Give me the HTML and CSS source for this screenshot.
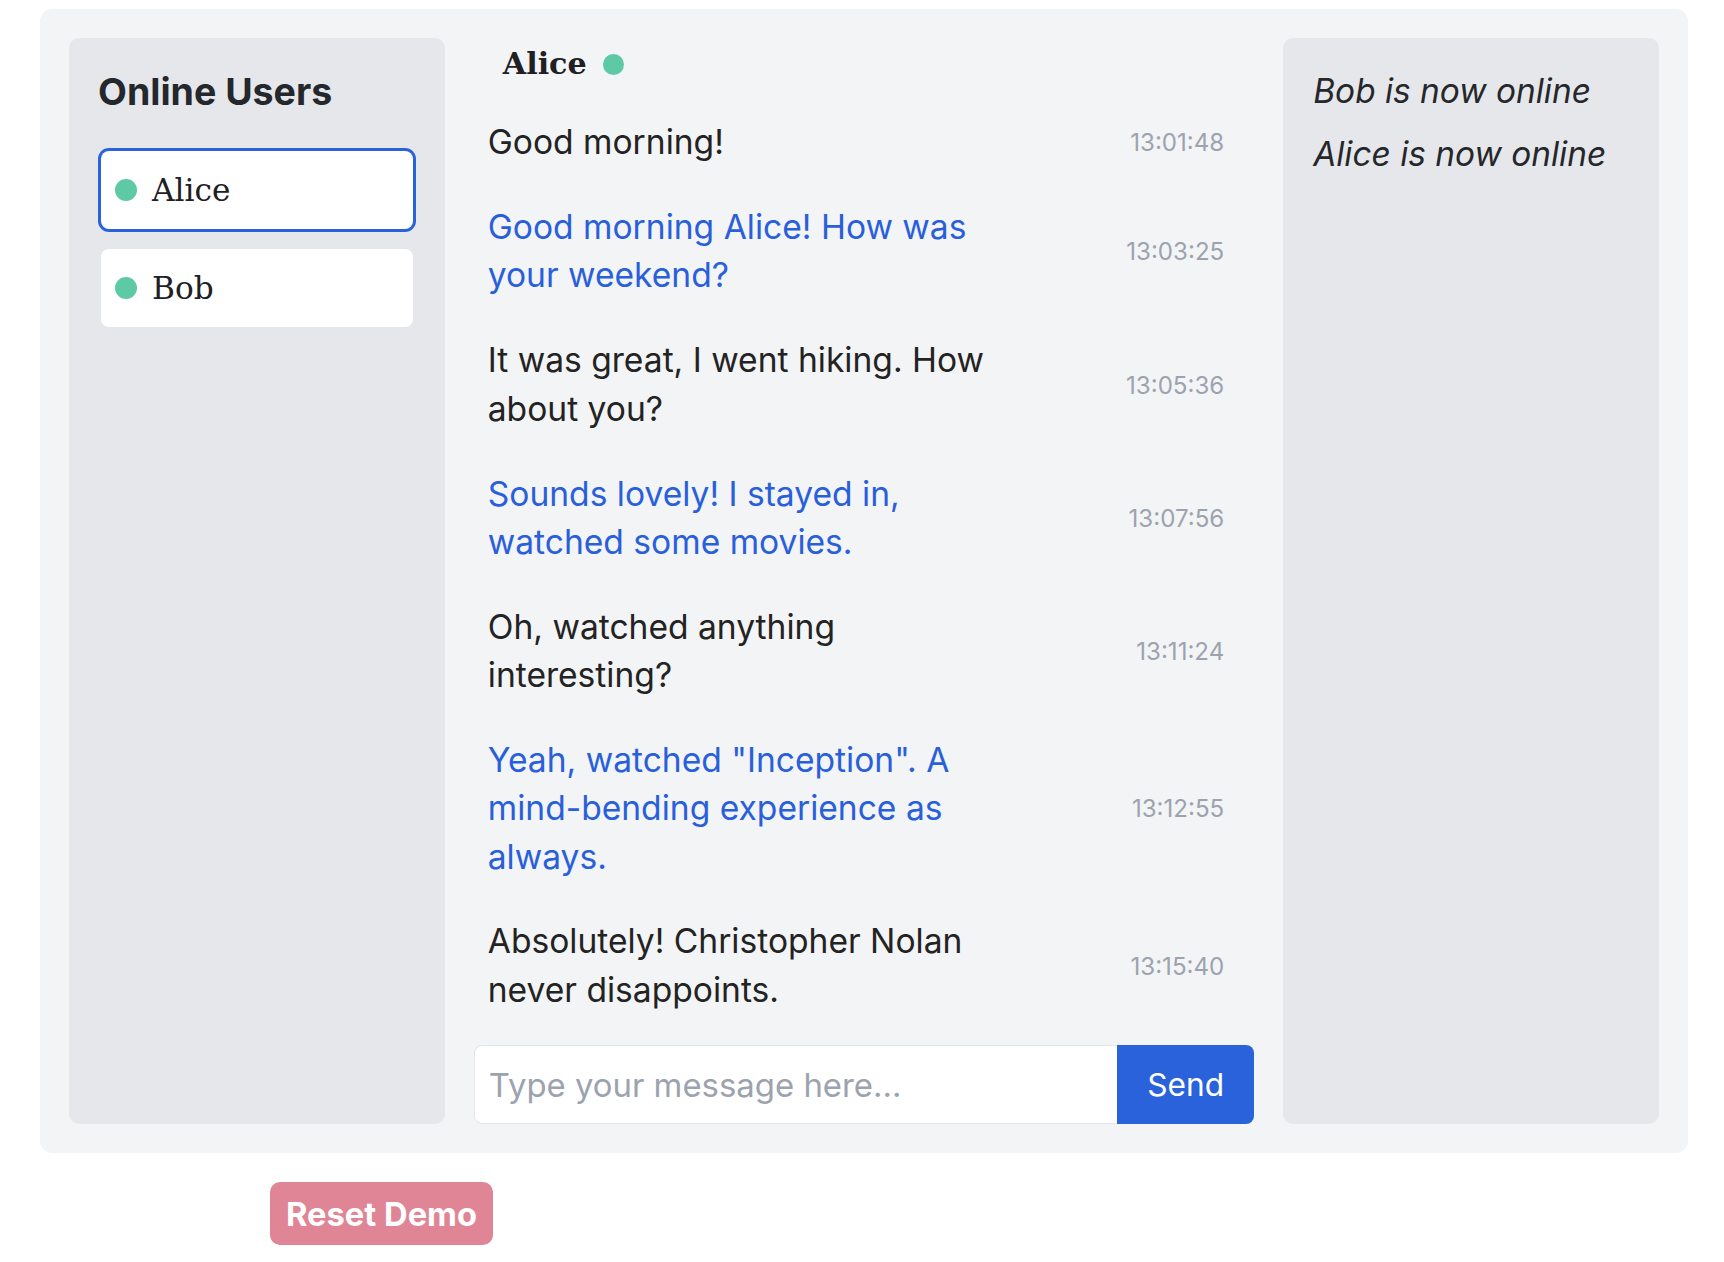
FILE: index.html
```html
<!DOCTYPE html>
<html lang="en">
<head>
<meta charset="utf-8">
<title>Chat Demo</title>
<link rel="stylesheet" href="styles.css">
</head>
<body>
<div class="page">
  <div class="app">
    <aside class="users">
      <h2 class="users-title">Online Users</h2>
      <ul class="user-list">
        <li class="user-card active"><span class="dot"></span><span class="user-name">Alice</span></li>
        <li class="user-card"><span class="dot"></span><span class="user-name">Bob</span></li>
      </ul>
    </aside>

    <section class="chat">
      <header class="chat-header"><span class="chat-name">Alice</span><span class="dot"></span></header>
      <div class="messages">
        <div class="msg"><p class="msg-text">Good morning!</p><span class="msg-time">13:01:48</span></div>
        <div class="msg mine"><p class="msg-text">Good morning Alice! How was your weekend?</p><span class="msg-time">13:03:25</span></div>
        <div class="msg"><p class="msg-text">It was great, I went hiking. How about you?</p><span class="msg-time">13:05:36</span></div>
        <div class="msg mine"><p class="msg-text">Sounds lovely! I stayed in, watched some movies.</p><span class="msg-time">13:07:56</span></div>
        <div class="msg"><p class="msg-text">Oh, watched anything interesting?</p><span class="msg-time">13:11:24</span></div>
        <div class="msg mine"><p class="msg-text">Yeah, watched "Inception". A mind-bending experience as always.</p><span class="msg-time">13:12:55</span></div>
        <div class="msg"><p class="msg-text">Absolutely! Christopher Nolan never disappoints.</p><span class="msg-time">13:15:40</span></div>
      </div>
      <form class="composer">
        <input class="composer-input" type="text" placeholder="Type your message here...">
        <button class="composer-send" type="button">Send</button>
      </form>
    </section>

    <aside class="events">
      <p class="event">Bob is now online</p>
      <p class="event">Alice is now online</p>
    </aside>
  </div>
  <button class="reset" type="button">Reset Demo</button>
</div>
</body>
</html>
```
FILE: styles.css
```css
* { box-sizing: border-box; }
html, body { margin: 0; padding: 0; background: #ffffff; }
body {
  font-family: Inter, "Liberation Sans", sans-serif;
  color: #222326;
}
.page {
  padding: 9px 36px 0 40px;
}
.app {
  background: #f3f4f6;
  border-radius: 12px;
  padding: 29px;
  display: grid;
  grid-template-columns: repeat(4, minmax(0, 1fr));
  gap: 29px;
}

/* Left: online users */
.users {
  background: #e5e7eb;
  border-radius: 10px;
  padding: 30px 29px;
}
.users-title {
  margin: 0;
  font-size: 37.5px;
  line-height: 48px;
  font-weight: 700;
  color: #24272b;
}
.user-list {
  list-style: none;
  margin: 35px 3px 0;
  padding: 0;
  display: flex;
  flex-direction: column;
  gap: 20px;
}
.user-card {
  height: 78px;
  background: #ffffff;
  border-radius: 8px;
  display: flex;
  align-items: center;
  padding: 0 14px;
  gap: 15px;
}
.user-card.active {
  box-shadow: 0 0 0 3px #2962db;
}
.dot {
  width: 22px;
  height: 22px;
  border-radius: 50%;
  background: #5ec9a5;
  flex: none;
}
.user-name {
  font-family: "DejaVu Serif", "Liberation Serif", serif;
  font-size: 31.2px;
  line-height: 40px;
  color: #1f2023;
}

/* Middle: chat */
.chat {
  grid-column: span 2;
  display: flex;
  flex-direction: column;
}
.chat-header {
  display: flex;
  align-items: center;
  gap: 16px;
  height: 40px;
  margin: 6px 0 16px;
  padding: 0 29px;
}
.chat-header .dot {
  width: 21px;
  height: 21px;
}
.chat-name {
  font-family: "DejaVu Serif", "Liberation Serif", serif;
  font-weight: 700;
  font-size: 30.2px;
  line-height: 40px;
  color: #1f2023;
}
.messages {
  display: flex;
  flex-direction: column;
}
.msg {
  display: flex;
  align-items: center;
  justify-content: space-between;
  padding: 18.3px 30px 18.3px 14px;
}
.msg-text {
  margin: 0;
  max-width: 525px;
  font-size: 33.6px;
  line-height: 48.3px;
  color: #232323;
}
.msg.mine .msg-text {
  color: #2a5fdb;
}
.msg-time {
  font-size: 24.1px;
  line-height: 30px;
  color: #9ca3af;
  white-space: nowrap;
  padding-top: 2px;
}
.composer {
  display: flex;
  margin: 13px 0 0;
  height: 79px;
}
.composer-input {
  flex: 1;
  min-width: 0;
  height: 79px;
  border: 1px solid #e3e5e9;
  border-right: none;
  border-radius: 8px 0 0 8px;
  background: #ffffff;
  padding: 0 14px;
  font-family: Inter, "Liberation Sans", sans-serif;
  font-size: 32.9px;
  color: #232323;
  outline: none;
}
.composer-input::placeholder {
  color: #9ca3af;
  opacity: 1;
}
.composer-send {
  width: 137px;
  height: 79px;
  border: none;
  border-radius: 0 8px 8px 0;
  background: #2962db;
  color: #ffffff;
  font-family: Inter, "Liberation Sans", sans-serif;
  font-size: 31.7px;
  padding: 0;
  cursor: pointer;
}

/* Right: events */
.events {
  background: #e5e7eb;
  border-radius: 10px;
  padding: 29px 30px;
  display: flex;
  flex-direction: column;
  gap: 15px;
}
.event {
  margin: 0;
  font-style: italic;
  font-size: 33.4px;
  line-height: 48px;
  color: #25272b;
}

/* Reset */
.reset {
  display: block;
  margin: 29px 0 0 230px;
  height: 63px;
  padding: 0 16px;
  border: none;
  border-radius: 10px;
  background: #e08595;
  color: #ffffff;
  font-family: Inter, "Liberation Sans", sans-serif;
  font-weight: 700;
  font-size: 32.7px;
  cursor: pointer;
}
```
